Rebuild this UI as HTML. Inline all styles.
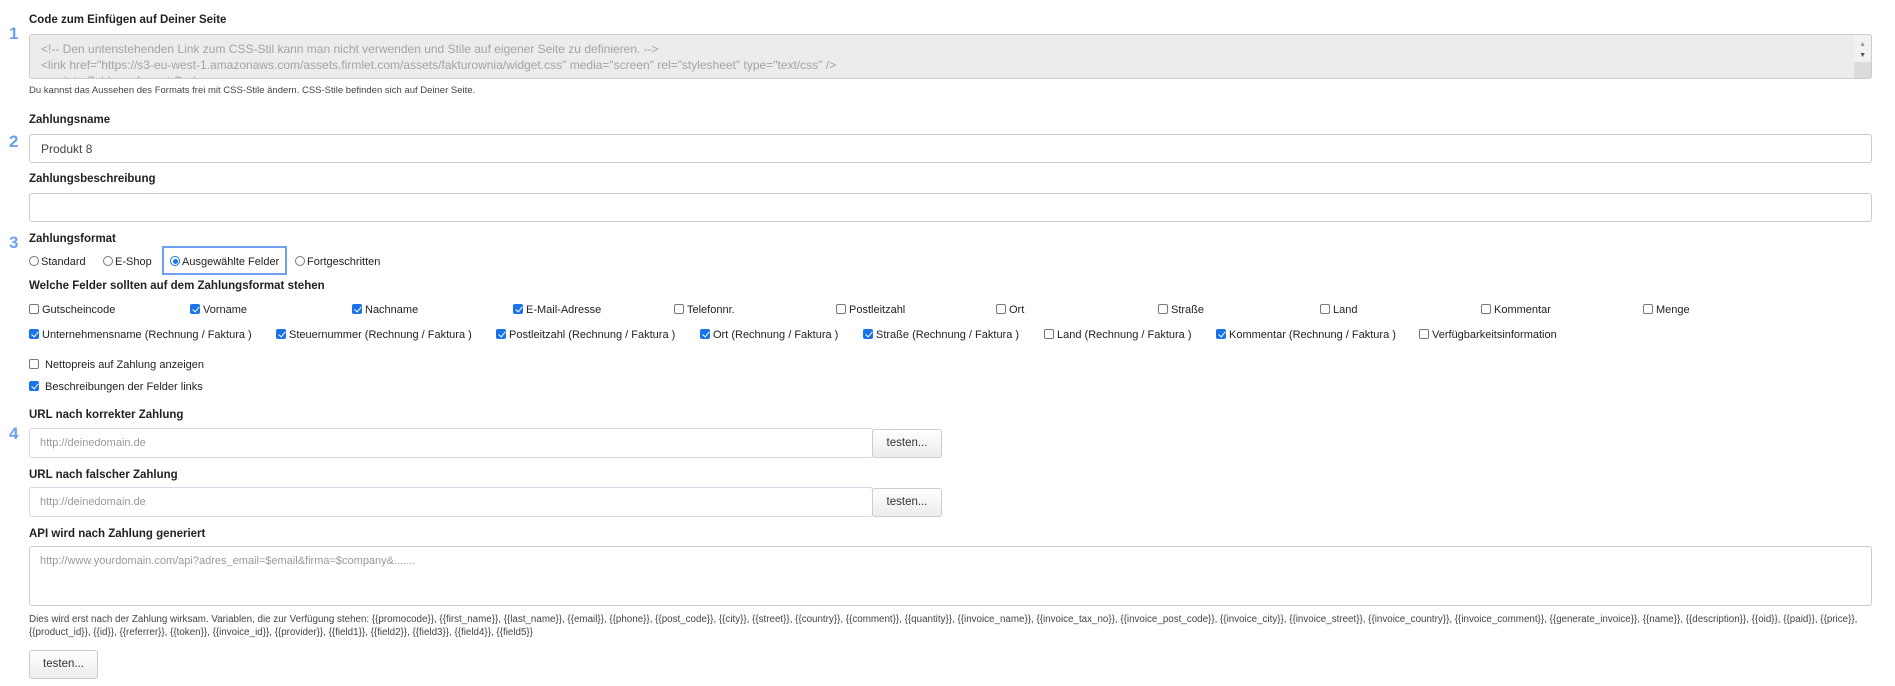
<!DOCTYPE html>
<html><head><meta charset="utf-8"><style>
body{margin:0;width:1895px;height:686px;background:#fff;font-family:"Liberation Sans",Arial,sans-serif;color:#222;position:relative;overflow:hidden}
.a{position:absolute;white-space:nowrap}
.lbl{font-size:11.5px;font-weight:bold;color:#222}
.num{font-size:17px;font-weight:bold;color:#6f9ff0;left:9px}
.inp{position:absolute;border:1px solid #ccc;border-radius:3px;background:#fff;box-sizing:border-box}
.cb{position:absolute;font-size:11px;color:#222;white-space:nowrap;line-height:13px}
.cb i{display:inline-block;width:10px;height:10px;border:1px solid #777;border-radius:2px;vertical-align:-1px;margin-right:3px;box-sizing:border-box;background:#fff}
.cb i.c{background:#1a73e8;border-color:#1a73e8;position:relative}
.cb i.c:after{content:"";position:absolute;left:2.5px;top:0px;width:3px;height:6px;border:solid #fff;border-width:0 1.5px 1.5px 0;transform:rotate(40deg)}
.rd{display:inline-block;width:10px;height:10px;border:1px solid #777;border-radius:50%;box-sizing:border-box;vertical-align:-1px;margin-right:2px;position:relative}
.rd.on{border-color:#1a73e8}
.rd.on:after{content:"";position:absolute;left:1.5px;top:1.5px;width:5px;height:5px;border-radius:50%;background:#1a73e8}
.btn{position:absolute;border:1px solid #ccc;border-radius:3px;background:linear-gradient(#fff,#ececec);font-size:11.5px;color:#333;text-align:center;box-sizing:border-box}
.ph{color:#999;font-size:11px}
</style></head><body>
<div class="a num" style="top:24px">1</div>
<div class="a lbl" style="left:29px;top:14px">Code zum Einfügen auf Deiner Seite</div>
<div class="inp" style="left:29px;top:34px;width:1843px;height:45px;background:#ececec;overflow:hidden">
<div class="a" style="left:11px;top:6px;font-size:12px;color:#a3a3a3;line-height:16px">&lt;!-- Den untenstehenden Link zum CSS-Stil kann man nicht verwenden und Stile auf eigener Seite zu definieren. --&gt;<br>&lt;link href="https://s3-eu-west-1.amazonaws.com/assets.firmlet.com/assets/fakturownia/widget.css" media="screen" rel="stylesheet" type="text/css" /&gt;<br>&lt;script&gt; Zahlungsformat Code</div>
<div class="a" style="right:0;top:0;width:17px;height:43px;background:#f1f1f1"></div>
<div class="a" style="right:0;top:27px;width:17px;height:16px;background:#dcdcdc"></div>
<div class="a" style="right:5px;top:6px;font-size:7px;color:#999">▲</div>
<div class="a" style="right:5px;top:17px;font-size:7px;color:#555">▼</div>
</div>
<div class="a" style="left:29px;top:85px;font-size:9.5px;color:#444">Du kannst das Aussehen des Formats frei mit CSS-Stile ändern. CSS-Stile befinden sich auf Deiner Seite.</div>

<div class="a num" style="top:132px">2</div>
<div class="a lbl" style="left:29px;top:114px">Zahlungsname</div>
<div class="inp" style="left:29px;top:134px;width:1843px;height:29px"><div class="a" style="left:11px;top:7px;font-size:12px;color:#444">Produkt 8</div></div>
<div class="a lbl" style="left:29px;top:173px">Zahlungsbeschreibung</div>
<div class="inp" style="left:29px;top:193px;width:1843px;height:29px"></div>

<div class="a num" style="top:233px">3</div>
<div class="a lbl" style="left:29px;top:233px">Zahlungsformat</div>
<div class="cb" style="left:29px;top:256px"><span class="rd"></span>Standard</div>
<div class="cb" style="left:103px;top:256px"><span class="rd"></span>E-Shop</div>
<div class="a" style="left:162px;top:246px;width:125px;height:29px;border:2px solid #6f9ff0;box-sizing:border-box"></div>
<div class="cb" style="left:170px;top:256px"><span class="rd on"></span>Ausgewählte Felder</div>
<div class="cb" style="left:295px;top:256px"><span class="rd"></span>Fortgeschritten</div>
<div class="a lbl" style="left:29px;top:280px">Welche Felder sollten auf dem Zahlungsformat stehen</div>
<div class="cb" style="left:29px;top:304px"><i></i>Gutscheincode</div>
<div class="cb" style="left:190px;top:304px"><i class="c"></i>Vorname</div>
<div class="cb" style="left:352px;top:304px"><i class="c"></i>Nachname</div>
<div class="cb" style="left:513px;top:304px"><i class="c"></i>E-Mail-Adresse</div>
<div class="cb" style="left:674px;top:304px"><i></i>Telefonnr.</div>
<div class="cb" style="left:836px;top:304px"><i></i>Postleitzahl</div>
<div class="cb" style="left:996px;top:304px"><i></i>Ort</div>
<div class="cb" style="left:1158px;top:304px"><i></i>Straße</div>
<div class="cb" style="left:1320px;top:304px"><i></i>Land</div>
<div class="cb" style="left:1481px;top:304px"><i></i>Kommentar</div>
<div class="cb" style="left:1643px;top:304px"><i></i>Menge</div>
<div class="cb" style="left:29px;top:329px"><i class="c"></i>Unternehmensname (Rechnung / Faktura )</div>
<div class="cb" style="left:276px;top:329px"><i class="c"></i>Steuernummer (Rechnung / Faktura )</div>
<div class="cb" style="left:496px;top:329px"><i class="c"></i>Postleitzahl (Rechnung / Faktura )</div>
<div class="cb" style="left:700px;top:329px"><i class="c"></i>Ort (Rechnung / Faktura )</div>
<div class="cb" style="left:863px;top:329px"><i class="c"></i>Straße (Rechnung / Faktura )</div>
<div class="cb" style="left:1044px;top:329px"><i></i>Land (Rechnung / Faktura )</div>
<div class="cb" style="left:1216px;top:329px"><i class="c"></i>Kommentar (Rechnung / Faktura )</div>
<div class="cb" style="left:1419px;top:329px"><i></i>Verfügbarkeitsinformation</div>
<div class="cb" style="left:29px;top:359px"><i style="margin-right:6px"></i>Nettopreis auf Zahlung anzeigen</div>
<div class="cb" style="left:29px;top:381px"><i class="c" style="margin-right:6px"></i>Beschreibungen der Felder links</div>

<div class="a num" style="top:424px">4</div>
<div class="a lbl" style="left:29px;top:409px">URL nach korrekter Zahlung</div>
<div class="inp" style="left:29px;top:428px;width:844px;height:30px;border-color:#d3dbe6"><div class="a ph" style="left:10px;top:8px">http://deinedomain.de</div></div>
<div class="btn" style="left:872px;top:429px;width:70px;height:29px;line-height:27px">testen...</div>
<div class="a lbl" style="left:29px;top:469px">URL nach falscher Zahlung</div>
<div class="inp" style="left:29px;top:487px;width:844px;height:30px;border-color:#d3dbe6"><div class="a ph" style="left:10px;top:8px">http://deinedomain.de</div></div>
<div class="btn" style="left:872px;top:488px;width:70px;height:29px;line-height:27px">testen...</div>
<div class="a lbl" style="left:29px;top:528px">API wird nach Zahlung generiert</div>
<div class="inp" style="left:29px;top:546px;width:1843px;height:60px"><div class="a ph" style="left:10px;top:8px">http://www.yourdomain.com/api?adres_email=$email&amp;firma=$company&amp;.......</div></div>
<div class="a" style="left:29px;top:613px;font-size:9.8px;color:#444;line-height:13px;white-space:normal;width:1850px">Dies wird erst nach der Zahlung wirksam. Variablen, die zur Verfügung stehen: {{promocode}}, {{first_name}}, {{last_name}}, {{email}}, {{phone}}, {{post_code}}, {{city}}, {{street}}, {{country}}, {{comment}}, {{quantity}}, {{invoice_name}}, {{invoice_tax_no}}, {{invoice_post_code}}, {{invoice_city}}, {{invoice_street}}, {{invoice_country}}, {{invoice_comment}}, {{generate_invoice}}, {{name}}, {{description}}, {{oid}}, {{paid}}, {{price}},<br>{{product_id}}, {{id}}, {{referrer}}, {{token}}, {{invoice_id}}, {{provider}}, {{field1}}, {{field2}}, {{field3}}, {{field4}}, {{field5}}</div>
<div class="btn" style="left:29px;top:650px;width:69px;height:29px;line-height:27px">testen...</div>
</body></html>
